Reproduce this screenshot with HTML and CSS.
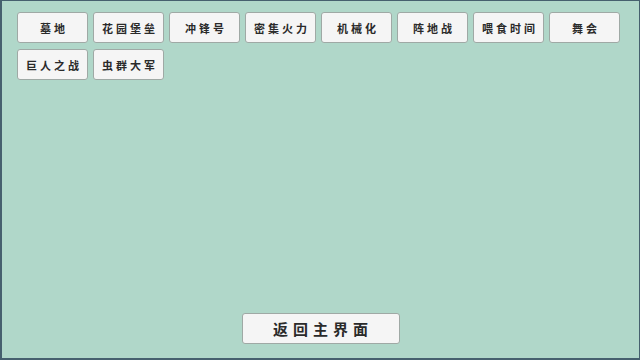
FILE: index.html
```html
<!DOCTYPE html>
<html lang="zh">
<head>
<meta charset="utf-8">
<link rel="stylesheet" href="styles.css">
</head>
<body>
<div class="screen">
  <div class="grid">
    <button class="btn">墓地</button>
    <button class="btn">花园堡垒</button>
    <button class="btn">冲锋号</button>
    <button class="btn">密集火力</button>
    <button class="btn">机械化</button>
    <button class="btn">阵地战</button>
    <button class="btn">喂食时间</button>
    <button class="btn">舞会</button>
    <button class="btn">巨人之战</button>
    <button class="btn">虫群大军</button>
  </div>
  <div class="footer">
    <button class="btn back">返回主界面</button>
  </div>
</div>
</body>
</html>
```
FILE: styles.css
```css
html, body {
  margin: 0;
  padding: 0;
  width: 640px;
  height: 360px;
  overflow: hidden;
}
.screen {
  box-sizing: border-box;
  width: 640px;
  height: 360px;
  background: #b0d7c9;
  border-style: solid;
  border-color: #46606e;
  border-width: 1px 1px 2px 2px;
  display: flex;
  flex-direction: column;
  font-family: "Noto Sans CJK SC", "Noto Sans", sans-serif;
}
.grid {
  display: flex;
  flex-wrap: wrap;
  gap: 6px 5px;
  padding: 11px 0 0 15px;
  width: 620px;
}
.btn {
  box-sizing: border-box;
  width: 71px;
  height: 31px;
  padding: 0 0 0 3px;
  background: #f5f5f5;
  border: 1px solid #9fa9a5;
  border-radius: 3px;
  font-family: inherit;
  font-size: 11px;
  font-weight: bold;
  letter-spacing: 3px;
  color: #2a2a2a;
}
.footer {
  margin-top: auto;
  display: flex;
  justify-content: center;
  padding: 0 0 14px 0;
}
.btn.back {
  width: 158px;
  height: 31px;
  font-size: 15px;
  letter-spacing: 5px;
  padding-left: 5px;
}
```
